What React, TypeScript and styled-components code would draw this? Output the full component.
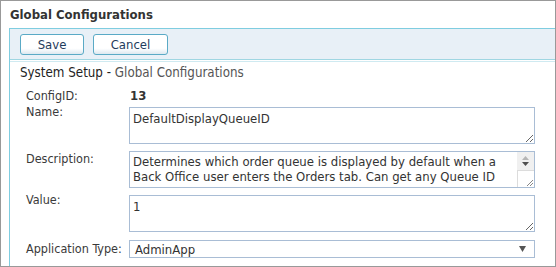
import React from "react";
import styled, { createGlobalStyle } from "styled-components";

const GlobalStyle = createGlobalStyle`
    html, body {
        margin: 0;
        padding: 0;
        background: #fff;
    }
    body {
        font-family: "DejaVu Sans Condensed", "DejaVu Sans", sans-serif;
        font-size: 12px;
        color: #333;
    }
`;

const Frame = styled.div`
    box-sizing: border-box;
    width: 556px;
    height: 267px;
    border: 1px solid #999;
    display: flex;
    flex-direction: column;
    overflow: hidden;
`;

const Title = styled.div`
    height: 27px;
    line-height: 27px;
    padding-left: 9px;
    font-size: 13px;
    font-weight: bold;
    color: #333;
`;

const Panel = styled.div`
    flex: 1;
    margin-left: 8px;
    border-left: 1px solid #7fcde0;
    border-top: 1px solid #7fcde0;
    display: flex;
    flex-direction: column;
`;

const Toolbar = styled.div`
    height: 31px;
    box-sizing: border-box;
    background: #e8f0f7;
    border-bottom: 1px solid #9fd6e2;
    padding: 5px 0 0 10px;
    display: flex;
    align-items: flex-start;
    gap: 9px;
`;

const ToolbarShadow = styled.div`
    height: 1px;
    margin-top: 1px;
    background: #cfeaf1;
`;

const Button = styled.button<{ $w: number }>`
    box-sizing: border-box;
    width: ${p => p.$w}px;
    height: 21px;
    padding: 0;
    border: 1px solid #5aaac6;
    border-radius: 3px;
    background: linear-gradient(#ffffff 0%, #ffffff 70%, #dde8f0 100%);
    font-family: inherit;
    font-size: 13px;
    color: #1f3b5c;
    line-height: 19px;
`;

const Crumbs = styled.div`
    padding: 2px 0 0 10px;
    height: 20px;
    line-height: 17px;
    font-size: 13.25px;
    color: #222;
`;

const CrumbCurrent = styled.span`
    color: #555;
`;

const Form = styled.div`
    padding: 0 0 0 16px;
    display: flex;
    flex-direction: column;
`;

const Row = styled.div<{ $gap?: number; $center?: boolean }>`
    display: flex;
    align-items: ${p => (p.$center ? "center" : "flex-start")};
    margin-top: ${p => p.$gap ?? 0}px;
`;

const Label = styled.div<{ $shift?: number }>`
    width: 103px;
    flex: none;
    font-size: 12.5px;
    line-height: 16px;
    color: #3a3a3a;
    margin-top: ${p => p.$shift ?? 0}px;
`;

const Strong = styled.div`
    font-weight: bold;
    font-size: 13px;
    line-height: 16px;
    padding-left: 1px;
    color: #333;
`;

const TextBox = styled.textarea`
    box-sizing: border-box;
    width: 406px;
    height: 37px;
    margin: 0;
    border: 1px solid #a9bdd5;
    padding: 3px 3px;
    font-family: inherit;
    font-size: 13px;
    line-height: 15px;
    color: #333;
    resize: both;
    outline: none;
`;

const DescBox = styled.div`
    box-sizing: border-box;
    width: 406px;
    height: 37px;
    border: 1px solid #a9bdd5;
    display: flex;
`;

const DescText = styled.div`
    flex: 1;
    padding: 2px 3px;
    font-size: 13px;
    line-height: 15px;
    color: #333;
    overflow: hidden;
    white-space: nowrap;
`;

const ScrollRail = styled.div`
    width: 17px;
    flex: none;
    background: #f0f0f0;
    display: flex;
    flex-direction: column;
`;

const ScrollArrows = styled.div`
    height: 18px;
    display: flex;
    flex-direction: column;
    align-items: center;
    justify-content: center;
    gap: 2px;
`;

const ScrollCorner = styled.div`
    flex: 1;
    background: #fff;
    border-left: 1px solid #dcdcdc;
    border-top: 1px solid #dcdcdc;
    display: flex;
    align-items: flex-end;
    justify-content: flex-end;
`;

const SelectBox = styled.div`
    box-sizing: border-box;
    width: 406px;
    height: 18px;
    border: 1px solid #a9bdd5;
    display: flex;
    align-items: center;
    justify-content: space-between;
    padding: 0 8px 0 5px;
    font-size: 13px;
    color: #333;
`;

const Grip = () => (
    <svg width="8" height="8" viewBox="0 0 8 8">
        <path d="M7 1 L1 7 M7 4 L4 7" stroke="#888" strokeWidth="1" />
    </svg>
);

const App: React.FC = () => {
    return (
        <>
            <GlobalStyle />
            <Frame>
                <Title>Global Configurations</Title>
                <Panel>
                    <Toolbar>
                        <Button $w={64}>Save</Button>
                        <Button $w={75}>Cancel</Button>
                    </Toolbar>
                    <ToolbarShadow />
                    <Crumbs>
                        System Setup - <CrumbCurrent>Global Configurations</CrumbCurrent>
                    </Crumbs>
                    <Form>
                        <Row $gap={4}>
                            <Label>ConfigID:</Label>
                            <Strong>13</Strong>
                        </Row>
                        <Row $gap={3}>
                            <Label $shift={-3}>Name:</Label>
                            <TextBox readOnly defaultValue="DefaultDisplayQueueID" />
                        </Row>
                        <Row $gap={7}>
                            <Label>Description:</Label>
                            <DescBox>
                                <DescText>
                                    Determines which order queue is displayed by default when a
                                    <br />
                                    Back Office user enters the Orders tab. Can get any Queue ID
                                </DescText>
                                <ScrollRail>
                                    <ScrollArrows>
                                        <svg width="7" height="4" viewBox="0 0 7 4">
                                            <path d="M0 4 L3.5 0 L7 4 Z" fill="#b5b5b5" />
                                        </svg>
                                        <svg width="7" height="4" viewBox="0 0 7 4">
                                            <path d="M0 0 L7 0 L3.5 4 Z" fill="#505050" />
                                        </svg>
                                    </ScrollArrows>
                                    <ScrollCorner>
                                        <Grip />
                                    </ScrollCorner>
                                </ScrollRail>
                            </DescBox>
                        </Row>
                        <Row $gap={7}>
                            <Label $shift={-3}>Value:</Label>
                            <TextBox readOnly defaultValue="1" />
                        </Row>
                        <Row $gap={8} $center>
                            <Label>Application Type:</Label>
                            <SelectBox>
                                <span>AdminApp</span>
                                <svg width="7" height="6" viewBox="0 0 7 6">
                                    <path d="M0 0 L7 0 L3.5 6 Z" fill="#555" />
                                </svg>
                            </SelectBox>
                        </Row>
                    </Form>
                </Panel>
            </Frame>
        </>
    );
};

export default App;
